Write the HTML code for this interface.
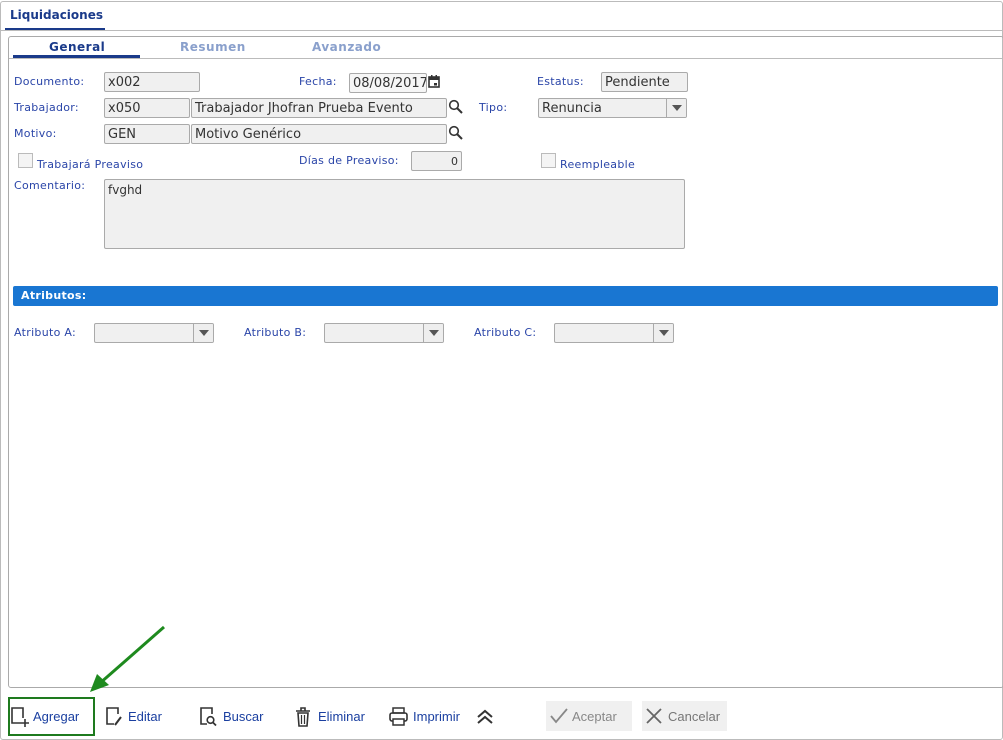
<!DOCTYPE html>
<html><head><meta charset="utf-8"><style>
*{box-sizing:border-box}
body{margin:0;width:1003px;height:740px;background:#fff;font-family:"DejaVu Sans","Liberation Sans",sans-serif;position:relative;overflow:hidden}
.a{position:absolute}
.lbl{position:absolute;font-size:11px;color:#2a45a8;letter-spacing:.3px}
.in{position:absolute;height:20px;border:1px solid #aaa;background:#f0f0f0;border-radius:2px;font-size:13px;color:#333;padding:2px 3px 0;font-family:"DejaVu Sans",sans-serif;white-space:nowrap;overflow:hidden}
.sel .ar{position:absolute;right:0;top:0;width:20px;height:18px;border-left:1px solid #aaa;background:#eee}
.sel .ar:after{content:"";position:absolute;left:5px;top:6px;border:5px solid transparent;border-top:6px solid #555}
.cb{position:absolute;width:15px;height:15px;border:1px solid #bbb;background:#f4f4f4}
.btn{position:absolute;top:706px;font-size:13px;color:#1a3fa0;font-family:"Liberation Sans",sans-serif}
</style></head><body>
<div class="a" style="left:0;top:1px;width:1003px;height:739px;border:1px solid #bbb;border-radius:3px"></div>
<div class="a" style="left:10px;top:8px;font-size:12px;font-weight:bold;color:#1a3a8a">Liquidaciones</div>
<div class="a" style="left:5px;top:28px;width:100px;height:2px;background:#1a3a8a"></div>
<div class="a" style="left:1px;top:30px;width:1002px;height:1px;background:#bbb"></div>
<div class="a" style="left:8px;top:36px;width:996px;height:652px;border:1px solid #aaa;border-radius:3px"></div>
<div class="a" style="left:49px;top:40px;font-size:12px;font-weight:bold;color:#1a3a8a;letter-spacing:.5px">General</div>
<div class="a" style="left:180px;top:40px;font-size:12px;font-weight:bold;color:#8aa0cc;letter-spacing:.5px">Resumen</div>
<div class="a" style="left:312px;top:40px;font-size:12px;font-weight:bold;color:#8aa0cc;letter-spacing:.5px">Avanzado</div>
<div class="a" style="left:13px;top:55px;width:127px;height:3px;background:#1a3a8a"></div>
<div class="a" style="left:9px;top:58px;width:994px;height:1px;background:#bbb"></div>

<div class="lbl" style="left:14px;top:75px">Documento:</div>
<div class="in" style="left:104px;top:72px;width:96px">x002</div>
<div class="lbl" style="left:299px;top:75px">Fecha:</div>
<div class="in" style="left:349px;top:73px;width:78px;background:#f6f6f6">08/08/2017</div>
<svg class="a" style="left:428px;top:75px" width="12" height="13" viewBox="0 0 12 13"><rect x="1" y="2" width="10" height="10" fill="none" stroke="#333" stroke-width="1.6"/><rect x="1" y="2" width="10" height="3" fill="#333"/><rect x="3" y="0" width="1.5" height="3" fill="#333"/><rect x="7.5" y="0" width="1.5" height="3" fill="#333"/><rect x="6" y="8" width="3" height="2.5" fill="#333"/></svg>
<div class="lbl" style="left:537px;top:75px">Estatus:</div>
<div class="in" style="left:601px;top:72px;width:87px">Pendiente</div>

<div class="lbl" style="left:14px;top:101px">Trabajador:</div>
<div class="in" style="left:104px;top:98px;width:86px">x050</div>
<div class="in" style="left:191px;top:98px;width:256px">Trabajador Jhofran Prueba Evento</div>
<svg class="a" style="left:448px;top:99px" width="16" height="16" viewBox="0 0 16 16"><circle cx="6" cy="6" r="4.3" fill="none" stroke="#333" stroke-width="1.6"/><path d="M9 9l5 5" stroke="#333" stroke-width="2"/></svg>
<div class="lbl" style="left:479px;top:101px">Tipo:</div>
<div class="in sel" style="left:538px;top:98px;width:149px">Renuncia<div class="ar"></div></div>

<div class="lbl" style="left:14px;top:127px">Motivo:</div>
<div class="in" style="left:104px;top:124px;width:86px">GEN</div>
<div class="in" style="left:191px;top:124px;width:256px">Motivo Genérico</div>
<svg class="a" style="left:448px;top:125px" width="16" height="16" viewBox="0 0 16 16"><circle cx="6" cy="6" r="4.3" fill="none" stroke="#333" stroke-width="1.6"/><path d="M9 9l5 5" stroke="#333" stroke-width="2"/></svg>

<div class="cb" style="left:18px;top:153px"></div>
<div class="lbl" style="left:37px;top:158px">Trabajará Preaviso</div>
<div class="lbl" style="left:299px;top:154px">Días de Preaviso:</div>
<div class="in" style="left:411px;top:151px;width:51px;text-align:right;font-size:11px;padding-top:3px">0</div>
<div class="cb" style="left:541px;top:153px"></div>
<div class="lbl" style="left:560px;top:158px">Reempleable</div>

<div class="lbl" style="left:14px;top:179px">Comentario:</div>
<div class="in" style="left:104px;top:179px;width:581px;height:70px;font-size:12px;padding:3px 3px">fvghd</div>

<div class="a" style="left:13px;top:286px;width:985px;height:20px;background:#1976d2;border-radius:2px;color:#fff;font-size:11px;font-weight:bold;padding:3px 8px;letter-spacing:.3px">Atributos:</div>

<div class="lbl" style="left:14px;top:326px">Atributo A:</div>
<div class="in sel" style="left:94px;top:323px;width:120px"><div class="ar"></div></div>
<div class="lbl" style="left:244px;top:326px">Atributo B:</div>
<div class="in sel" style="left:324px;top:323px;width:120px"><div class="ar"></div></div>
<div class="lbl" style="left:474px;top:326px">Atributo C:</div>
<div class="in sel" style="left:554px;top:323px;width:120px"><div class="ar"></div></div>

<div class="a" style="left:8px;top:697px;width:87px;height:39px;border:2px solid #1e7a1e"></div>
<svg class="a" style="left:85px;top:622px" width="90" height="75" viewBox="0 0 90 75"><path d="M79 5L14 62" stroke="#1e8a1e" stroke-width="3"/><path d="M5 70L12 52L24 63Z" fill="#1e8a1e"/></svg>

<svg class="a" style="left:10px;top:706px" width="20" height="22" viewBox="0 0 20 22"><path d="M11 17H2V2h11v10" fill="none" stroke="#333" stroke-width="1.6"/><path d="M15 13v8M11 17h8" stroke="#333" stroke-width="1.6"/></svg>
<div class="btn" style="left:33px;top:709px">Agregar</div>
<svg class="a" style="left:105px;top:706px" width="20" height="22" viewBox="0 0 20 22"><path d="M9 18H2V2h11v6" fill="none" stroke="#333" stroke-width="1.6"/><path d="M10 19l6-8" stroke="#333" stroke-width="2"/></svg>
<div class="btn" style="left:128px;top:709px">Editar</div>
<svg class="a" style="left:199px;top:706px" width="20" height="22" viewBox="0 0 20 22"><path d="M8 18H2V2h11v6" fill="none" stroke="#333" stroke-width="1.6"/><circle cx="11.5" cy="14" r="3.3" fill="none" stroke="#333" stroke-width="1.6"/><path d="M14 16.5l3 3" stroke="#333" stroke-width="1.8"/></svg>
<div class="btn" style="left:223px;top:709px">Buscar</div>
<svg class="a" style="left:294px;top:706px" width="20" height="22" viewBox="0 0 20 22"><path d="M2 5h14M7 5V2h4v3" fill="none" stroke="#333" stroke-width="1.6"/><path d="M4 7h10l-1 13H5z" fill="none" stroke="#333" stroke-width="1.6"/><path d="M7.5 9v9M10.5 9v9" stroke="#333" stroke-width="1.2"/></svg>
<div class="btn" style="left:318px;top:709px">Eliminar</div>
<svg class="a" style="left:388px;top:706px" width="22" height="22" viewBox="0 0 22 22"><rect x="5" y="2" width="11" height="5" fill="none" stroke="#333" stroke-width="1.5"/><rect x="2" y="7" width="17" height="8" rx="2" fill="none" stroke="#333" stroke-width="1.6"/><rect x="5" y="13" width="11" height="6" fill="#fff" stroke="#333" stroke-width="1.5"/></svg>
<div class="btn" style="left:413px;top:709px">Imprimir</div>
<svg class="a" style="left:475px;top:708px" width="20" height="18" viewBox="0 0 20 18"><path d="M3 9l7-6 7 6M3 15l7-6 7 6" fill="none" stroke="#333" stroke-width="2"/></svg>

<div class="a" style="left:546px;top:701px;width:86px;height:30px;background:#f0f0f0"></div>
<svg class="a" style="left:549px;top:707px" width="20" height="18" viewBox="0 0 20 18"><path d="M2 9l5 6L18 2" fill="none" stroke="#888" stroke-width="1.8"/></svg>
<div class="btn" style="left:572px;top:709px;color:#888">Aceptar</div>
<div class="a" style="left:642px;top:701px;width:85px;height:30px;background:#f0f0f0"></div>
<svg class="a" style="left:645px;top:707px" width="18" height="18" viewBox="0 0 18 18"><path d="M2 2l14 14M16 2L2 16" stroke="#666" stroke-width="1.8"/></svg>
<div class="btn" style="left:668px;top:709px;color:#777">Cancelar</div>
</body></html>
